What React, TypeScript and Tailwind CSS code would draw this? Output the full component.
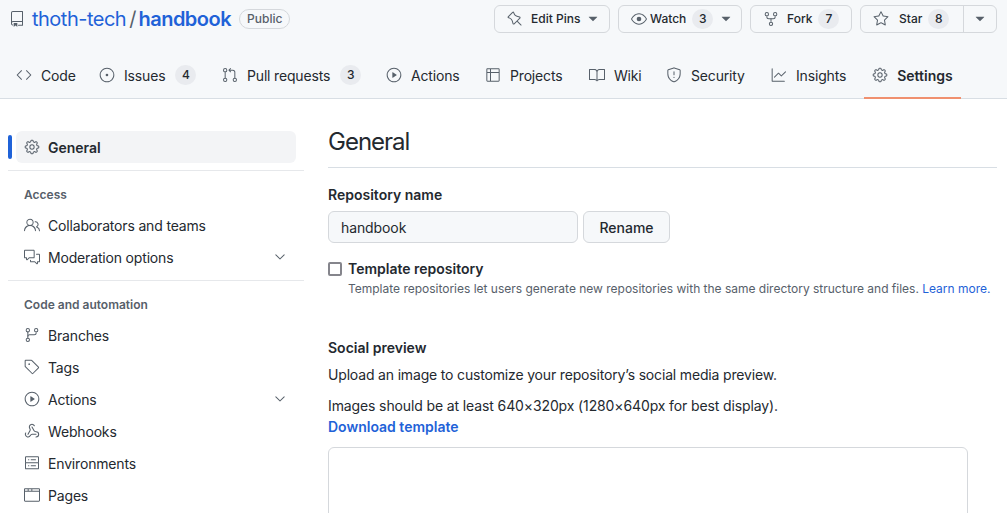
import type { ReactNode, ComponentType } from "react"
import {
  GoRepo,
  GoPin,
  GoEye,
  GoRepoForked,
  GoStar,
  GoCode,
  GoIssueOpened,
  GoGitPullRequest,
  GoPlay,
  GoTable,
  GoBook,
  GoShield,
  GoGraph,
  GoGear,
  GoPeople,
  GoCommentDiscussion,
  GoGitBranch,
  GoTag,
  GoServer,
  GoBrowser,
  GoChevronDown,
  GoTriangleDown,
} from "react-icons/go"
import { Webhook } from "lucide-react"

function Count({ n, className = "" }: { n: number; className?: string }) {
  return (
    <span
      className={`flex h-[20px] w-[21px] items-center justify-center rounded-full bg-[#e9ebef] text-[12px] font-medium tracking-normal text-[#24292f] ${className}`}
    >
      {n}
    </span>
  )
}

function HeadButton({ children, className = "" }: { children: ReactNode; className?: string }) {
  return (
    <div
      className={`flex h-[28px] items-center rounded-md border border-[#d5d8dc] bg-[#f6f8fa] text-[12px] font-medium text-[#24292f] ${className}`}
    >
      {children}
    </div>
  )
}

const tabs = [
  { icon: GoCode, label: "Code", w: "w-[83px]" },
  { icon: GoIssueOpened, label: "Issues", count: 4, w: "w-[123px]" },
  { icon: GoGitPullRequest, label: "Pull requests", count: 3, w: "w-[164px]" },
  { icon: GoPlay, label: "Actions", w: "w-[99px]" },
  { icon: GoTable, label: "Projects", w: "w-[104px]" },
  { icon: GoBook, label: "Wiki", w: "w-[77px]" },
  { icon: GoShield, label: "Security", w: "w-[105px]" },
  { icon: GoGraph, label: "Insights", w: "w-[101px]" },
]

function Tabs() {
  return (
    <div className="mt-[21px] flex h-[45px] items-start pl-[16px]">
      {tabs.map((t) => (
        <div
          key={t.label}
          className={`flex h-[42px] items-center text-[14px] tracking-[-0.17px] text-[#24292f] ${t.w}`}
        >
          <t.icon className="mr-[9px] h-[16px] w-[16px] text-[#57606a]" />
          <span>{t.label}</span>
          {t.count !== undefined && <Count n={t.count} className="ml-[10px]" />}
        </div>
      ))}
      <div className="-ml-[8px] flex h-[45px] w-[97px] justify-center border-b-2 border-[#f0906f]">
        <div className="flex h-[42px] items-center text-[14px] font-semibold text-[#24292f]">
          <GoGear className="mr-[9px] h-[16px] w-[16px] text-[#57606a]" />
          Settings
        </div>
      </div>
    </div>
  )
}

function Header() {
  return (
    <header className="h-[99px] border-b border-[#d8dee4] bg-[#f6f8fa]">
      <div className="flex h-[33px] items-end justify-between pr-[10px] pl-[9px]">
        <div className="flex h-[28px] items-center">
          <GoRepo className="h-[16px] w-[16px] text-[#57606a]" />
          <span className="ml-[7px] text-[20px] leading-[28px] tracking-[-0.5px] text-[#1f62d8]">thoth-tech</span>
          <span className="mr-[2px] ml-[3px] text-[20px] leading-[28px] text-[#57606a]">/</span>
          <span className="text-[20px] leading-[28px] font-semibold tracking-[-0.5px] text-[#1f62d8]">handbook</span>
          <span className="ml-[8px] flex h-[20px] items-center rounded-full border border-[#d5d8dc] px-[7px] text-[12px] font-medium text-[#57606a]">
            Public
          </span>
        </div>
        <div className="flex items-center gap-[8px]">
          <HeadButton className="w-[116px] pl-[12px]">
            <GoPin className="h-[16px] w-[16px] text-[#57606a]" />
            <span className="ml-[8px]">Edit Pins</span>
            <GoTriangleDown className="ml-[5px] h-[16px] w-[16px] text-[#57606a]" />
          </HeadButton>
          <HeadButton className="w-[124px] pl-[12px]">
            <GoEye className="h-[16px] w-[16px] text-[#57606a]" />
            <span className="ml-[3px]">Watch</span>
            <Count n={3} className="ml-[6px]" />
            <GoTriangleDown className="ml-[5px] h-[16px] w-[16px] text-[#57606a]" />
          </HeadButton>
          <HeadButton className="w-[102px] pl-[12px]">
            <GoRepoForked className="h-[16px] w-[16px] text-[#57606a]" />
            <span className="ml-[8px]">Fork</span>
            <Count n={7} className="ml-[6px]" />
          </HeadButton>
          <HeadButton className="w-[137px]">
            <div className="flex h-full w-[103px] items-center border-r border-[#d5d8dc] pl-[12px]">
              <GoStar className="h-[16px] w-[16px] text-[#57606a]" />
              <span className="ml-[10px]">Star</span>
              <Count n={8} className="ml-[6px]" />
            </div>
            <div className="flex flex-1 justify-center">
              <GoTriangleDown className="h-[16px] w-[16px] text-[#57606a]" />
            </div>
          </HeadButton>
        </div>
      </div>
      <Tabs />
    </header>
  )
}

function WebhookIcon({ className }: { className?: string }) {
  return <Webhook className={className} strokeWidth={1.6} />
}

function NavItem({
  icon: Icon,
  label,
  chevron,
}: {
  icon: ComponentType<{ className?: string }>
  label: string
  chevron?: boolean
}) {
  return (
    <div className="ml-[8px] flex h-[32px] w-[280px] items-center pr-[8px] pl-[8px] text-[14px] tracking-[-0.17px] text-[#24292f]">
      <Icon className="mr-[8px] h-[16px] w-[16px] text-[#57606a]" />
      <span className="flex-1">{label}</span>
      {chevron && <GoChevronDown className="h-[16px] w-[16px] text-[#57606a]" />}
    </div>
  )
}

function NavHeading({ label, className }: { label: string; className: string }) {
  return (
    <div className={`flex items-center pl-[16px] text-[12px] font-semibold text-[#57606a] ${className}`}>{label}</div>
  )
}

function Sidebar() {
  return (
    <aside className="w-[296px] shrink-0">
      <div className="relative">
        <span className="absolute top-[4px] left-0 h-[24px] w-[4px] rounded-md bg-[#1f62d8]" />
        <div className="ml-[8px] flex h-[32px] w-[280px] items-center rounded-md bg-[#f3f4f6] pl-[8px] text-[14px] font-semibold text-[#24292f]">
          <GoGear className="mr-[8px] h-[16px] w-[16px] text-[#57606a]" />
          General
        </div>
      </div>
      <div className="mt-[7px] border-t border-[#e6e8eb]" />
      <div className="mt-[10px]">
        <NavHeading label="Access" className="h-[28px]" />
        <NavItem icon={GoPeople} label="Collaborators and teams" />
        <NavItem icon={GoCommentDiscussion} label="Moderation options" chevron />
      </div>
      <div className="mt-[7px] border-t border-[#e6e8eb]" />
      <div className="mt-[10px]">
        <NavHeading label="Code and automation" className="h-[28px]" />
        <NavItem icon={GoGitBranch} label="Branches" />
        <NavItem icon={GoTag} label="Tags" />
        <NavItem icon={GoPlay} label="Actions" chevron />
        <NavItem icon={WebhookIcon} label="Webhooks" />
        <NavItem icon={GoServer} label="Environments" />
        <NavItem icon={GoBrowser} label="Pages" />
      </div>
    </aside>
  )
}

function Main() {
  return (
    <main className="ml-[24px] w-[669px] text-[#24292f]">
      <div className="h-[37px] border-b border-[#d8dee4]">
        <h1 className="text-[24px] leading-[22px] font-normal tracking-[-1px]">General</h1>
      </div>
      <div className="mt-[17px] text-[14px] leading-[20px] font-semibold">Repository name</div>
      <div className="mt-[6px] flex gap-[5px]">
        <div className="flex h-[32px] w-[250px] items-center rounded-md border border-[#d5d8dc] bg-[#f6f8fa] pl-[12px] text-[14px] tracking-[-0.1px]">
          handbook
        </div>
        <div className="flex h-[32px] w-[87px] items-center justify-center rounded-md border border-[#d5d8dc] bg-[#f6f8fa] text-[14px] font-medium">
          Rename
        </div>
      </div>
      <div className="mt-[16px] flex items-center">
        <span className="h-[14px] w-[14px] rounded-[2px] border-2 border-[#85858c] bg-white" />
        <span className="ml-[6px] text-[14px] leading-[20px] font-semibold">Template repository</span>
      </div>
      <p className="mt-[1px] pl-[20px] text-[12px] leading-[18px] tracking-[-0.01px] text-[#57606a]">
        Template repositories let users generate new repositories with the same directory structure and files.{" "}
        <span className="text-[#1f62d8]">Learn more.</span>
      </p>
      <div className="mt-[40px] text-[14px] leading-[20px] font-semibold">Social preview</div>
      <p className="mt-[7px] text-[14px] leading-[20px] tracking-[-0.17px]">
        Upload an image to customize your repository’s social media preview.
      </p>
      <p className="mt-[11px] text-[14px] leading-[20px] tracking-[-0.12px]">
        Images should be at least 640×320px (1280×640px for best display).
      </p>
      <div className="text-[14px] leading-[21px] font-semibold text-[#1f62d8]">Download template</div>
      <div className="mt-[10px] h-[200px] w-[640px] rounded-md border border-[#d5d8dc] bg-white" />
    </main>
  )
}

export default function App() {
  return (
    <div className="h-[513px] overflow-hidden bg-white font-['Inter',sans-serif]">
      <Header />
      <div className="flex pt-[32px] pr-[10px] pl-[8px]">
        <Sidebar />
        <Main />
      </div>
    </div>
  )
}
